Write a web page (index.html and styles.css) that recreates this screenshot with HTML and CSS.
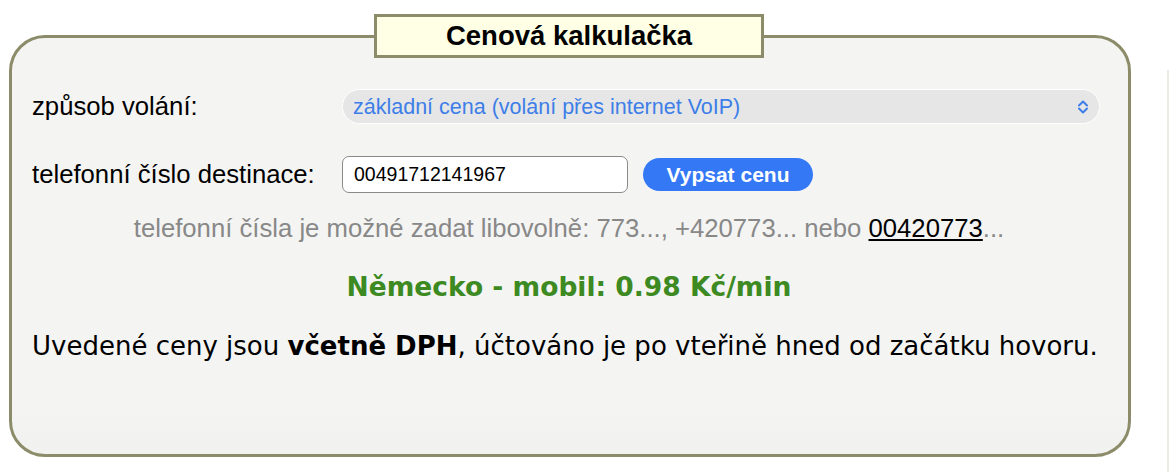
FILE: index.html
```html
<!DOCTYPE html>
<html lang="cs">
<head>
    <meta charset="UTF-8">
    <meta name="viewport" content="width=device-width, initial-scale=1.0">
    <title>Cenová kalkulačka</title>
    <link rel="stylesheet" href="styles.css">
</head>
<body>
    <div class="page">
        <fieldset class="calc">
            <legend>Cenová kalkulačka</legend>
            <!-- způsob volání -->
            <div class="row">
                <label class="lbl" for="typ">způsob volání:</label>
                <div class="select-wrap">
                    <select id="typ" class="select">
                        <option>základní cena (volání přes internet VoIP)</option>
                    </select>
                    <svg class="chev" width="12" height="16" viewBox="0 0 12 16">
                        <path d="M2 6.5 L6 2.5 L10 6.5 M2 9.5 L6 13.5 L10 9.5" fill="none" stroke="#3d7ee8" stroke-width="2" stroke-linecap="round" stroke-linejoin="round"/>
                    </svg>
                </div>
            </div>
            <!-- telefonní číslo -->
            <div class="row row-tel">
                <label class="lbl" for="tel">telefonní číslo destinace:</label>
                <input id="tel" class="tel" type="text" value="00491712141967">
                <button class="btn">Vypsat cenu</button>
            </div>
            <p class="hint">telefonní čísla je možné zadat libovolně: 773..., +420773... nebo <u>00420773</u>...</p>
            <p class="result">Německo - mobil: 0.98 Kč/min</p>
            <p class="note">Uvedené ceny jsou <b>včetně DPH</b>, účtováno je po vteřině hned od začátku hovoru.</p>
        </fieldset>
        <div class="side"></div>
    </div>
</body>
</html>
```
FILE: styles.css
```css
* {
    margin: 0;
    padding: 0;
    box-sizing: border-box;
}
body {
    background: #fff;
    font-family: "Liberation Sans", Arial, sans-serif;
    color: #000;
}
.page {
    display: flex;
    align-items: flex-start;
    padding-top: 14px;
}
.calc {
    width: 1122px;
    height: 443px;
    margin-left: 9px;
    border: 3px solid #8c8c6a;
    border-radius: 36px;
    background: linear-gradient(#f4f4f3 0, #f4f4f3 86%, #f1f1ef 100%);
    padding: 0 22px 0 20px;
}
.calc legend {
    margin: 0 auto;
    width: 390px;
    height: 44px;
    background: #ffffe6;
    border: 3px solid #8c8c6a;
    text-align: center;
    font-weight: bold;
    font-size: 27.5px;
    line-height: 38px;
}
.row {
    display: flex;
    align-items: center;
    margin-top: 31px;
}
.lbl {
    width: 310px;
    font-size: 25.7px;
}
.select-wrap {
    position: relative;
    flex: 1;
    margin-right: 6px;
}
.select {
    appearance: none;
    -webkit-appearance: none;
    width: 100%;
    height: 35px;
    border: 1px solid #fff;
    border-radius: 18px;
    background: #e6e6e6;
    color: #3d7ee8;
    font-family: inherit;
    font-size: 21.5px;
    padding-left: 10px;
    outline: none;
}
.chev {
    position: absolute;
    right: 11px;
    top: 10px;
}
.row-tel {
    margin-top: 32px;
}
.tel {
    width: 286px;
    height: 37px;
    border: 1px solid #8a8a8a;
    border-radius: 7px;
    background: #fff;
    font-family: inherit;
    font-size: 19.5px;
    padding-left: 11px;
    color: #000;
}
.btn {
    margin-left: 15px;
    width: 170px;
    height: 33px;
    border: none;
    border-radius: 17px;
    background: #3478f6;
    color: #fff;
    font-family: inherit;
    font-weight: bold;
    font-size: 21px;
}
.hint {
    margin-top: 20px;
    line-height: 30px;
    text-align: center;
    color: #888;
    font-size: 25.7px;
}
.hint u {
    color: #000;
}
.result {
    margin-top: 29px;
    line-height: 30px;
    text-align: center;
    color: #3d8a22;
    font-family: "DejaVu Sans", Verdana, sans-serif;
    font-weight: bold;
    font-size: 26.5px;
}
.note {
    margin-top: 29px;
    line-height: 30px;
    font-family: "DejaVu Sans", Verdana, sans-serif;
    font-size: 26px;
}
.side {
    margin-top: 56px;
    margin-left: 36px;
    height: 402px;
    border-left: 2px solid #ecece2;
}
```
